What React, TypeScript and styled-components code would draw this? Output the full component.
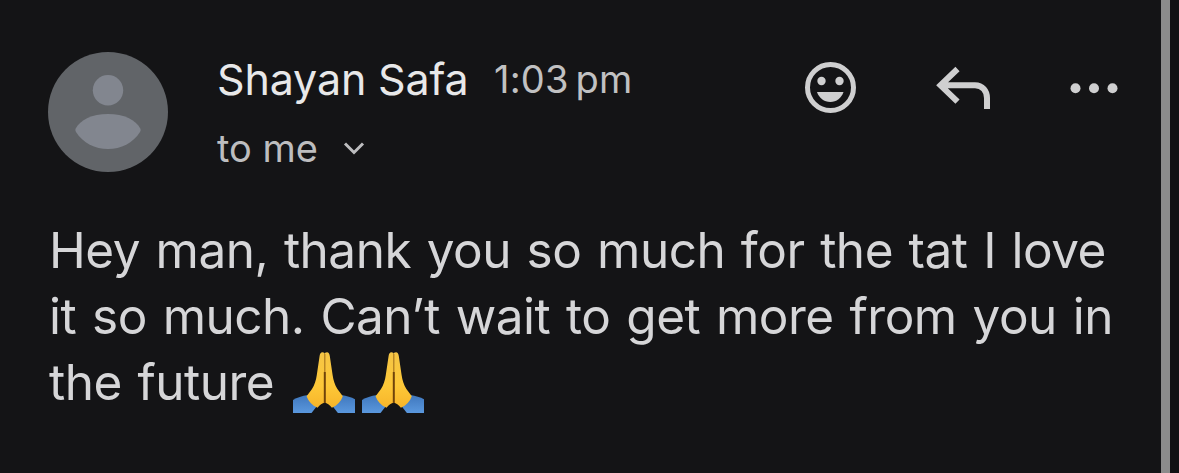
import React from 'react';
import styled, { createGlobalStyle } from 'styled-components';

const GlobalStyle = createGlobalStyle`
  * {
    box-sizing: border-box;
  }
  body {
    margin: 0;
    background: #141416;
    font-family: Inter, 'Liberation Sans', sans-serif;
  }
`;

const Page = styled.div`
  display: flex;
  width: 1179px;
  height: 473px;
  overflow: hidden;
  background: #141416;
`;

const Message = styled.main`
  width: 1161px;
  flex: none;
`;

const ScrollEdge = styled.div`
  width: 18px;
  flex: none;
  border-left: 9px solid #8b8b8b;
  background: #111113;
`;

const Header = styled.header`
  display: flex;
  height: 217px;
  padding: 52px 0 0 48px;
`;

const AvatarIcon = styled.svg`
  width: 120px;
  height: 120px;
  flex: none;
`;

const Sender = styled.div`
  width: 586px;
  margin-left: 49px;
  flex: none;
`;

const SenderRow = styled.div`
  display: flex;
  height: 54px;
  padding-top: 2px;
`;

const Name = styled.span`
  width: 277px;
  font-size: 43px;
  line-height: 50px;
  letter-spacing: -0.15px;
  color: #e8e8e9;
  white-space: nowrap;
`;

const Time = styled.span`
  font-size: 38px;
  line-height: 50px;
  letter-spacing: 0.2px;
  word-spacing: -4px;
  color: #c1c1c2;
  white-space: nowrap;
`;

const Recipient = styled.div`
  display: flex;
  align-items: center;
  margin-top: 19px;
  font-size: 38px;
  line-height: 46px;
  color: #bdbdbf;
`;

const ChevronIcon = styled.svg`
  width: 22px;
  height: 14px;
  margin-left: 25px;
`;

const Actions = styled.div`
  display: flex;
  align-items: flex-start;
`;

const ActionIcon = styled.svg<{ $gap?: number }>`
  flex: none;
  margin-left: ${(props) => props.$gap || 0}px;
`;

const Body = styled.div`
  padding-left: 49px;
  font-size: 49.5px;
  line-height: 66px;
  letter-spacing: -0.5px;
  color: #d6d6d8;
`;

const Line = styled.div<{ $wordSpacing: number }>`
  display: flex;
  height: 66px;
  word-spacing: ${(props) => props.$wordSpacing}px;
  white-space: nowrap;
`;

const Emojis = styled.span`
  display: flex;
  gap: 7px;
  margin: 3px 0 0 19px;
`;

const Avatar = () => (
  <AvatarIcon viewBox='0 0 120 120'>
    <circle cx='60' cy='60' r='60' fill='#616468' />
    <circle cx='60' cy='38.3' r='15.2' fill='#82868f' />
    <path
      d='M60 62C76 62 88 68 92.3 76.5C92.8 77.6 92.7 78.8 92 80C85 91 73 97 60 97S35 91 28 80C27.3 78.8 27.2 77.6 27.7 76.5C32 68 44 62 60 62Z'
      fill='#82868f'
    />
  </AvatarIcon>
);

const PrayHalf = () => (
  <>
    <path d='M0 48C4 45.5 9 44 15 43L24 54L18.5 61H0Z' fill='url(#sleeve)' />
    <path
      d='M31.6 1C29 -0.8 27 0.4 26.6 4L23.8 23C23 28.5 21.5 33 19 37L13.6 44.3C15.5 49.5 19 53.5 24.5 55.8C27 52.8 29 51.2 32 50.6Z'
      fill='url(#skin)'
    />
  </>
);

const Pray = () => (
  <svg width='62' height='61' viewBox='0 0 62 61'>
    <defs>
      <linearGradient id='skin' x1='0' y1='0' x2='0' y2='1'>
        <stop offset='0' stopColor='#f5c545' />
        <stop offset='0.6' stopColor='#fdc838' />
        <stop offset='1' stopColor='#f7b52a' />
      </linearGradient>
      <linearGradient id='sleeve' x1='0' y1='0' x2='0' y2='1'>
        <stop offset='0' stopColor='#3f77bd' />
        <stop offset='1' stopColor='#5a98de' />
      </linearGradient>
    </defs>
    <PrayHalf />
    <g transform='translate(63.4 0) scale(-1 1)'>
      <PrayHalf />
    </g>
    <path d='M31.8 2V20' stroke='#b98525' strokeWidth='1.4' />
    <path d='M31.8 20V51' stroke='#6f430a' strokeWidth='2' />
  </svg>
);

const App = () => {
  return (
    <>
      <GlobalStyle />
      <Page>
        <Message>
          <Header>
            <Avatar />
            <Sender>
              <SenderRow>
                <Name>Shayan Safa</Name>
                <Time>1:03 pm</Time>
              </SenderRow>
              <Recipient>
                to me
                <ChevronIcon viewBox='0 0 22 14' fill='none'>
                  <path d='M2 2.5L11 11.5L20 2.5' stroke='#bdbdbf' strokeWidth='3' />
                </ChevronIcon>
              </Recipient>
            </Sender>
            <Actions>
              <ActionIcon width='54' height='72' viewBox='0 0 54 72'>
                <circle cx='27.5' cy='35.5' r='23' fill='none' stroke='#cfcfd0' strokeWidth='5' />
                <circle cx='18.5' cy='29' r='4.2' fill='#cfcfd0' />
                <circle cx='36.5' cy='29' r='4.2' fill='#cfcfd0' />
                <path d='M14 40H40.5C38.5 46 33.5 50 27.3 50S16 46 14 40Z' fill='#cfcfd0' />
              </ActionIcon>
              <ActionIcon $gap={76} width='60' height='72' viewBox='0 0 60 72' fill='none'>
                <path
                  d='M24.5 17L7.5 33.3L24.5 49.6M8 33.3H42C49.5 33.3 54 39 54 46V57'
                  stroke='#cfcfd0'
                  strokeWidth='6'
                />
              </ActionIcon>
              <ActionIcon $gap={77} width='50' height='72' viewBox='0 0 50 72' fill='#cfcfd0'>
                <circle cx='5.5' cy='36.3' r='5' />
                <circle cx='24' cy='36.3' r='5' />
                <circle cx='42.5' cy='36.3' r='5' />
              </ActionIcon>
            </Actions>
          </Header>
          <Body>
            <Line $wordSpacing={2.2}>Hey man, thank you so much for the tat I love</Line>
            <Line $wordSpacing={2.4}>it so much. Can’t wait to get more from you in</Line>
            <Line $wordSpacing={2.2}>
              the future
              <Emojis>
                <Pray />
                <Pray />
              </Emojis>
            </Line>
          </Body>
        </Message>
        <ScrollEdge />
      </Page>
    </>
  );
};

export default App;
